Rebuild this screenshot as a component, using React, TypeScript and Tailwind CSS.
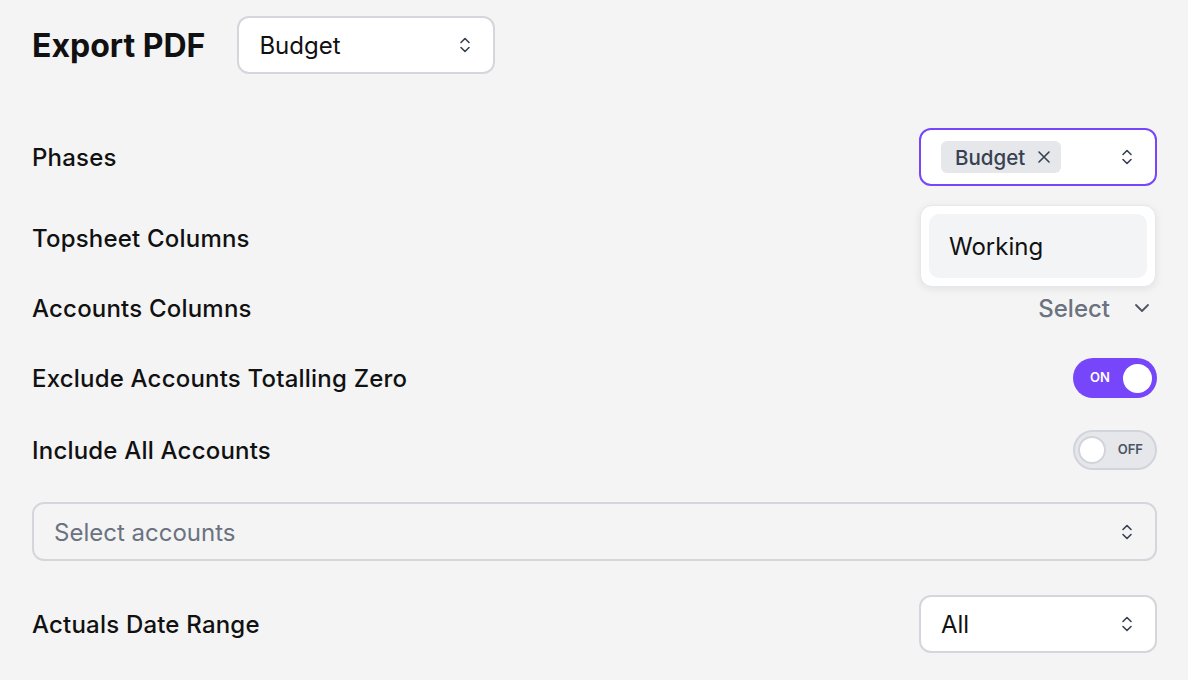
import React from "react";

const UpDown = () => (
  <svg width="12" height="18" viewBox="0 0 12 18" fill="none" stroke="#374151" strokeWidth="1.6" strokeLinecap="round" strokeLinejoin="round">
    <path d="M2 6.5 6 2.5 10 6.5" />
    <path d="M2 11.5 6 15.5 10 11.5" />
  </svg>
);

const Label = ({ children }: { children: React.ReactNode }) => (
  <div className="pt-[2px] text-[24px] font-medium tracking-[0.2px] text-[#111111]">{children}</div>
);

export default function App() {
  return (
    <div
      className="min-h-[680px] w-full bg-[#f4f4f4] pl-8 pr-[31px] pt-4"
      style={{ fontFamily: "Inter, 'Noto Sans', sans-serif" }}
    >
      <div className="flex h-[58px] items-center">
        <h1 className="pt-[2px] text-[32px] font-bold text-[#111111]">Export PDF</h1>
        <div className="ml-[32px] flex h-[58px] w-[258px] items-center justify-between rounded-xl border-2 border-[#d4d6db] bg-white pl-5 pr-[22px]">
          <span className="pt-[2px] text-[24px] text-[#111111]">Budget</span>
          <UpDown />
        </div>
      </div>

      <div className="mt-[54px] flex h-[58px] items-center justify-between">
        <Label>Phases</Label>
        <div className="relative">
          <div className="flex h-[58px] w-[238px] items-center justify-between rounded-xl border-2 border-[#7745fa] bg-white pl-5 pr-[22px]">
            <div className="flex h-8 items-center gap-3 rounded-md bg-[#e5e7eb] pl-3.5 pr-2.5">
              <span className="pt-[2px] text-[20.5px] font-medium text-[#374151]">Budget</span>
              <svg width="14" height="14" viewBox="0 0 14 14" stroke="#374151" strokeWidth="1.6" strokeLinecap="round">
                <path d="M2 2 12 12M12 2 2 12" />
              </svg>
            </div>
            <UpDown />
          </div>
          <div className="absolute left-px top-[77px] z-10 w-[236px] rounded-xl border border-[#e5e7eb] bg-white p-2 shadow-[0_2px_8px_rgba(0,0,0,0.08)]">
            <div className="flex h-16 items-center rounded-[10px] bg-[#f3f4f6] px-5 pt-[2px] text-[24px] text-[#111111]">
              Working
            </div>
          </div>
        </div>
      </div>

      <div className="mt-8 flex h-10 items-center">
        <Label>Topsheet Columns</Label>
      </div>

      <div className="mt-[30px] flex h-10 items-center justify-between">
        <Label>Accounts Columns</Label>
        <div className="flex items-center gap-[24px] pr-[7px]">
          <span className="pt-[2px] text-[24px] font-medium text-[#6b7280]">Select</span>
          <svg width="16" height="10" viewBox="0 0 16 10" fill="none" stroke="#4b5563" strokeWidth="1.8" strokeLinecap="round" strokeLinejoin="round">
            <path d="M2 2 8 8 14 2" />
          </svg>
        </div>
      </div>

      <div className="mt-[30px] flex h-10 items-center justify-between">
        <Label>Exclude Accounts Totalling Zero</Label>
        <div className="flex h-10 w-[84px] items-center justify-between rounded-full bg-[#7745fa] pl-[17px] pr-[5px]">
          <span className="text-[13px] font-semibold text-white">ON</span>
          <div className="h-[29px] w-[29px] rounded-full bg-white" />
        </div>
      </div>

      <div className="mt-8 flex h-10 items-center justify-between">
        <Label>Include All Accounts</Label>
        <div className="flex h-10 w-[84px] items-center justify-between rounded-full border-2 border-[#d1d5db] bg-[#e5e7eb] pl-[3px] pr-[12px]">
          <div className="h-[28px] w-[28px] rounded-full border-2 border-[#d1d5db] bg-white" />
          <span className="text-[13px] font-semibold text-[#4b5563]">OFF</span>
        </div>
      </div>

      <div className="mt-8 flex h-[59px] items-center justify-between rounded-xl border-2 border-[#d4d6db] pl-5 pr-[22px]">
        <span className="pt-[2px] text-[24px] text-[#6b7280]">Select accounts</span>
        <UpDown />
      </div>

      <div className="mt-[34px] flex h-[58px] items-center justify-between">
        <Label>Actuals Date Range</Label>
        <div className="flex h-[58px] w-[238px] items-center justify-between rounded-xl border-2 border-[#d4d6db] bg-white pl-5 pr-[22px]">
          <span className="pt-[2px] text-[24px] text-[#111111]">All</span>
          <UpDown />
        </div>
      </div>
    </div>
  );
}
